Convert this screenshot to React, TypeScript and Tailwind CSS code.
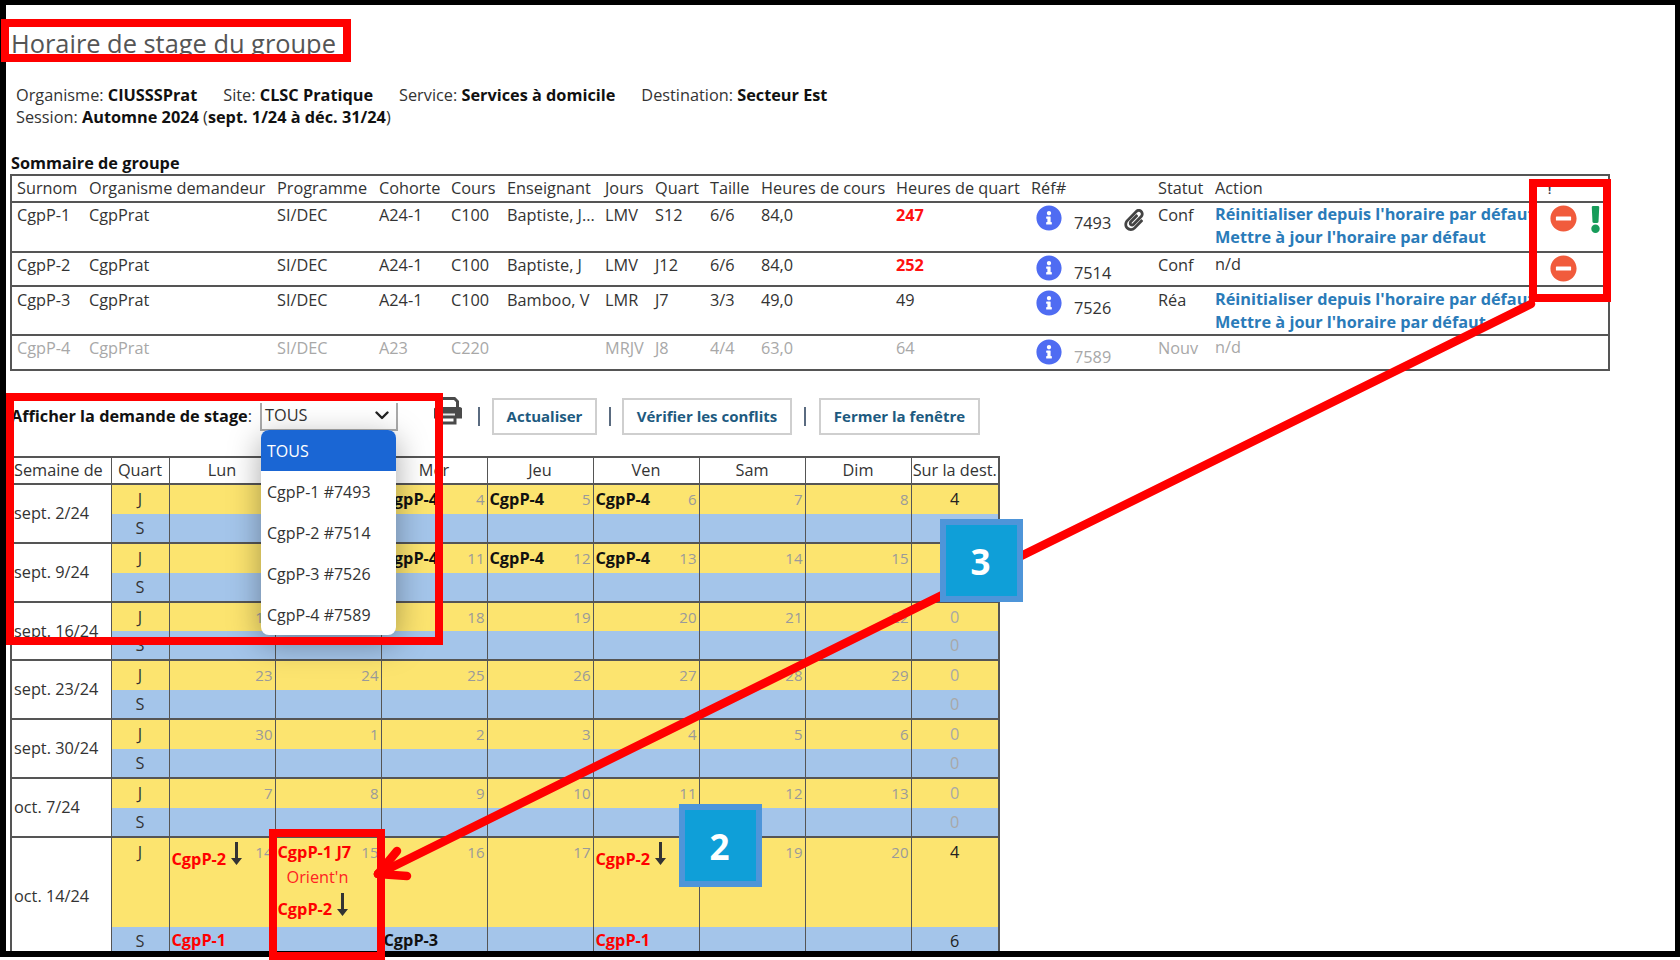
import React from "react";
import { FaInfoCircle, FaMinusCircle, FaPaperclip, FaExclamation } from "react-icons/fa";

const GRAY = "text-[#a8a8a8]";

function ChevronDown() {
  return (
    <svg width="14" height="9" viewBox="0 0 14 9" fill="none" stroke="#222" strokeWidth="2.4" strokeLinecap="round" strokeLinejoin="round">
      <path d="M1.5 1.5 7 7l5.5-5.5" />
    </svg>
  );
}

function Printer() {
  return (
    <svg width="28" height="28" viewBox="0 0 28 28" fill="none" stroke="#4a4a4a" strokeWidth="3">
      <path d="M7 11V3.5A2 2 0 0 1 9 1.5h11.5l3 3V11" />
      <path d="M3 11.5h22a2 2 0 0 1 2 2v6.5H1v-6.5a2 2 0 0 1 2-2z" fill="#4a4a4a" />
      <path d="M7 17.5h14" stroke="#e8e8e8" strokeWidth="2" />
      <path d="M7 20v6h14v-6" />
    </svg>
  );
}

function DownArrow() {
  return (
    <svg width="11" height="23" viewBox="0 0 11 23" className="inline-block shrink-0" fill="#333">
      <path d="M4 0h3v16h4l-5.5 7L0 16h4z" />
    </svg>
  );
}

function InfoCell({ n, gray, clip }: { n: string; gray?: boolean; clip?: boolean }) {
  return (
    <div className="flex items-end pl-[5px]">
      <FaInfoCircle className="w-[26px] h-[26px] text-[#4f6cf2] shrink-0" />
      <span className={`ml-[12px] leading-[21px] relative top-[3px] ${gray ? GRAY : ""}`}>{n}</span>
      {clip && <FaPaperclip className="ml-[12px] w-[22px] h-[22px] text-[#444] shrink-0" />}
    </div>
  );
}

const summary = [
  { h: "h-[50px]", top: "", itop: "pt-[2px]", v: ["CgpP-1", "CgpPrat", "SI/DEC", "A24-1", "C100", "Baptiste, J...", "LMV", "S12", "6/6", "84,0"], q: "247", red: true, n: "7493", clip: true, st: "Conf", act: true, stop: true, warn: true },
  { h: "h-[34px]", top: "", itop: "pt-[2px]", v: ["CgpP-2", "CgpPrat", "SI/DEC", "A24-1", "C100", "Baptiste, J", "LMV", "J12", "6/6", "84,0"], q: "252", red: true, n: "7514", st: "Conf", stop: true },
  { h: "h-[49px]", top: "pt-px", itop: "pt-[3px]", v: ["CgpP-3", "CgpPrat", "SI/DEC", "A24-1", "C100", "Bamboo, V", "LMR", "J7", "3/3", "49,0"], q: "49", n: "7526", st: "Réa", act: true },
  { h: "h-[35px]", top: "", itop: "pt-[3px]", v: ["CgpP-4", "CgpPrat", "SI/DEC", "A23", "C220", "", "MRJV", "J8", "4/4", "63,0"], q: "64", n: "7589", st: "Nouv", gray: true },
];

const heads = ["Surnom", "Organisme demandeur", "Programme", "Cohorte", "Cours", "Enseignant", "Jours", "Quart", "Taille", "Heures de cours", "Heures de quart", "Réf#", "Statut", "Action"];

function SummaryTable() {
  return (
    <table className="table-fixed border-collapse w-[1598px] -ml-px border-2 border-[#555]">
      <colgroup>
        <col className="w-[71px]" />
        <col className="w-[188px]" />
        <col className="w-[102px]" />
        <col className="w-[72px]" />
        <col className="w-[56px]" />
        <col className="w-[98px]" />
        <col className="w-[50px]" />
        <col className="w-[55px]" />
        <col className="w-[51px]" />
        <col className="w-[135px]" />
        <col className="w-[135px]" />
        <col className="w-[127px]" />
        <col className="w-[57px]" />
        <col className="w-[322px]" />
        <col className="w-[79px]" />
      </colgroup>
      <thead>
        <tr className="h-[27px] border-b-2 border-[#555]">
          {heads.map((h, i) => (
            <th key={h} className={`font-normal text-left whitespace-nowrap leading-[22px] pb-[2px] ${i === 0 ? "pl-[5px] pr-[7px]" : "px-[7px]"}`}>{h}</th>
          ))}
          <th className="font-bold text-left pl-[18px] pt-[3px] text-[11px] text-[#334]">!</th>
        </tr>
      </thead>
      <tbody>
        {summary.map((r) => (
          <tr key={r.n} className={`${r.h} border-b-2 border-[#555] align-top`}>
            {r.v.map((c, i) => (
              <td key={i} className={`${i === 0 ? "pl-[5px] pr-[7px]" : "px-[7px]"} ${r.top} whitespace-nowrap leading-[24px] ${r.gray ? GRAY : ""}`}>{c}</td>
            ))}
            <td className={`px-[7px] ${r.top} leading-[24px] ${r.red ? "font-bold text-[#ff1111]" : r.gray ? GRAY : ""}`}>{r.q}</td>
            <td className={`px-[7px] ${r.itop}`}><InfoCell n={r.n} gray={r.gray} clip={r.clip} /></td>
            <td className={`px-[7px] ${r.top} leading-[24px] ${r.gray ? GRAY : ""}`}>{r.st}</td>
            <td className={`px-[7px] ${r.top} whitespace-nowrap leading-[23px]`}>
              {r.act ? (
                <div className="font-bold text-[#2a7bb9]">
                  <div>Réinitialiser depuis l'horaire par défaut</div>
                  <div>Mettre à jour l'horaire par défaut</div>
                </div>
              ) : (
                <span className={r.gray ? GRAY : ""}>n/d</span>
              )}
            </td>
            <td className="pl-[20px] pt-[2px]">
              <div className="flex items-start">
                {r.stop && <FaMinusCircle className="w-[27px] h-[27px] text-[#f15b3c] shrink-0" />}
                {r.warn && <FaExclamation className="ml-[5px] mt-px w-[27px] h-[27px] text-[#179c5a] shrink-0" />}
              </div>
            </td>
          </tr>
        ))}
      </tbody>
    </table>
  );
}

type Week = { label: string; dates: number[]; j: Record<number, React.ReactNode>; s: Record<number, React.ReactNode>; destJ: string; destS: string; big?: boolean; jh: string };

const B4 = <span className="font-bold text-[#111]">CgpP-4</span>;
const R = (t: string) => <span className="font-bold text-[#f00]">{t}</span>;
const RA = (t: string) => (
  <span className="flex items-start gap-[5px] mt-[3px]">
    <span className="font-bold text-[#f00] mt-[4px]">{t}</span>
    <DownArrow />
  </span>
);

const weeks: Week[] = [
  { label: "sept. 2/24", jh: "h-[30px]", dates: [2, 3, 4, 5, 6, 7, 8], j: { 1: B4, 2: B4, 3: B4, 4: B4 }, s: {}, destJ: "4", destS: "" },
  { label: "sept. 9/24", jh: "h-[30px]", dates: [9, 10, 11, 12, 13, 14, 15], j: { 1: B4, 2: B4, 3: B4, 4: B4 }, s: {}, destJ: "4", destS: "" },
  { label: "sept. 16/24", jh: "h-[29px]", dates: [16, 17, 18, 19, 20, 21, 22], j: {}, s: {}, destJ: "0", destS: "0" },
  { label: "sept. 23/24", jh: "h-[30px]", dates: [23, 24, 25, 26, 27, 28, 29], j: {}, s: {}, destJ: "0", destS: "0" },
  { label: "sept. 30/24", jh: "h-[30px]", dates: [30, 1, 2, 3, 4, 5, 6], j: {}, s: {}, destJ: "0", destS: "0" },
  { label: "oct. 7/24", jh: "h-[30px]", dates: [7, 8, 9, 10, 11, 12, 13], j: {}, s: {}, destJ: "0", destS: "0" },
  {
    label: "oct. 14/24",
    jh: "h-[90px]",
    dates: [14, 15, 16, 17, 18, 19, 20],
    j: { 0: RA("CgpP-2"), 1: R("CgpP-1 J7"), 4: RA("CgpP-2") },
    s: { 0: R("CgpP-1"), 2: <span className="font-bold text-[#111]">CgpP-3</span>, 4: R("CgpP-1") },
    destJ: "4",
    destS: "6",
    big: true,
  },
];

const dayHeads = ["Lun", "Mar", "Mer", "Jeu", "Ven", "Sam", "Dim"];

function Calendar() {
  return (
    <table className="table-fixed border-collapse w-[988px] -ml-px border-2 border-[#555]">
      <colgroup>
        <col className="w-[100px]" />
        <col className="w-[58px]" />
        <col className="w-[106px]" />
        <col className="w-[106px]" />
        <col className="w-[106px]" />
        <col className="w-[106px]" />
        <col className="w-[106px]" />
        <col className="w-[106px]" />
        <col className="w-[106px]" />
        <col className="w-[88px]" />
      </colgroup>
      <thead>
        <tr className="h-[27px] border-b-2 border-[#555]">
          <th className="font-normal border-r border-[#555] text-left pl-[2px] whitespace-nowrap">Semaine de</th>
          <th className="font-normal border-r border-[#555]">Quart</th>
          {dayHeads.map((d) => (
            <th key={d} className="font-normal border-r border-[#555]">{d}</th>
          ))}
          <th className="font-normal whitespace-nowrap">Sur la dest.</th>
        </tr>
      </thead>
      <tbody>
        {weeks.map((w) => (
          <React.Fragment key={w.label}>
            <tr className={`${w.jh} bg-[#fce46f] align-top`}>
              <td rowSpan={2} className="bg-white border-r border-b-2 border-[#555] pl-[2px] align-middle whitespace-nowrap">{w.label}</td>
              <td className="text-center border-r border-[#555] leading-[28px]">J</td>
              {w.dates.map((d, i) => (
                <td key={i} className="border-r border-[#555] px-[2px] pt-px">
                  <div className="flex justify-between items-start leading-[26px]">
                    {w.j[i] ?? <span />}
                    <span className="text-[#9a9a9a] text-[15px]">{d}</span>
                  </div>
                  {w.big && i === 1 && (
                    <>
                      <div className="pl-[9px] text-[#f22] leading-[26px] -mt-px">Orient'n</div>
                      <div className="mt-px">{RA("CgpP-2")}</div>
                    </>
                  )}
                </td>
              ))}
              <td className={`text-center leading-[28px] ${w.destJ === "0" ? GRAY : "text-[#222]"}`}>{w.destJ}</td>
            </tr>
            <tr className="h-[29px] bg-[#a4c5ea] border-b-2 border-[#555] align-top">
              <td className="text-center border-r border-[#555] leading-[28px]">S</td>
              {w.dates.map((d, i) => (
                <td key={i} className="border-r border-[#555] px-[2px] leading-[26px]">{w.s[i]}</td>
              ))}
              <td className={`text-center leading-[28px] ${w.destS === "0" ? GRAY : "text-[#222]"}`}>{w.destS}</td>
            </tr>
          </React.Fragment>
        ))}
      </tbody>
    </table>
  );
}

function FilterRow() {
  const btn = "h-[37px] border-2 border-[#cfcfcf] flex items-center justify-center font-bold text-[15px] text-[#1d5a80] bg-white";
  const sep = "w-[2px] h-[19px] bg-[#5a6b80]";
  return (
    <div className="flex items-center">
      <div className="w-[249px] whitespace-nowrap"><span className="font-bold text-[#111]">Afficher la demande de stage</span>:</div>
      <div className="w-[138px] h-[28px] border-2 border-t-0 border-[#aaa] flex items-center justify-between pl-[3px] pr-[7px]">
        <span>TOUS</span>
        <ChevronDown />
      </div>
      <div className="ml-[36px] mb-[11px]"><Printer /></div>
      <div className={`ml-[16px] ${sep}`} />
      <div className={`ml-[12px] w-[105px] ${btn}`}>Actualiser</div>
      <div className={`ml-[12px] ${sep}`} />
      <div className={`ml-[11px] w-[170px] ${btn}`}>Vérifier les conflits</div>
      <div className={`ml-[12px] ${sep}`} />
      <div className={`ml-[13px] w-[161px] ${btn}`}>Fermer la fenêtre</div>
    </div>
  );
}

function Dropdown() {
  const items = ["CgpP-1 #7493", "CgpP-2 #7514", "CgpP-3 #7526", "CgpP-4 #7589"];
  return (
    <div className="absolute left-[261px] top-[430px] w-[135px] h-[205px] bg-white rounded-[8px] overflow-hidden text-[16px] shadow-[0_8px_32px_rgba(0,0,0,0.35)]">
      <div className="h-[41px] bg-[#1a66d4] text-white flex items-center pl-[6px]">TOUS</div>
      {items.map((t) => (
        <div key={t} className="h-[41px] flex items-center pl-[6px] text-[#333]">{t}</div>
      ))}
    </div>
  );
}

function NumberBox({ n, cls }: { n: string; cls: string }) {
  return (
    <div className={`absolute w-[83px] h-[83px] bg-[#0f9fd8] border-[6px] border-[#4e95d9] flex items-center justify-center pt-[4px] pr-[2px] text-white font-bold text-[35px] ${cls}`}>{n}</div>
  );
}

export default function App() {
  return (
    <div className="relative w-[1680px] h-[960px] overflow-hidden bg-white font-['Open_Sans',sans-serif] text-[16.3px] text-[#333]">
      <div className="w-[1680px] h-[957px] overflow-hidden border-t-[5px] border-l-[6px] border-r-[5px] border-b-[6px] border-black pl-[5px]">
        <h1 className="mt-[21px] text-[25.4px] leading-[34px] text-[#555] font-normal">Horaire de stage du groupe</h1>
        <div className="mt-[24px] pl-[5px] leading-[22px]">
          <div className="flex gap-[26px]">
            <span>Organisme: <b className="text-[#111]">CIUSSSPrat</b></span>
            <span>Site: <b className="text-[#111]">CLSC Pratique</b></span>
            <span>Service: <b className="text-[#111]">Services à domicile</b></span>
            <span>Destination: <b className="text-[#111]">Secteur Est</b></span>
          </div>
          <div>Session: <b className="text-[#111]">Automne 2024</b> (<b className="text-[#111]">sept. 1/24 à déc. 31/24</b>)</div>
        </div>
        <div className="mt-[25px] font-bold text-[#111] leading-[21px]">Sommaire de groupe</div>
        <SummaryTable />
        <div className="mt-[26px]"><FilterRow /></div>
        <div className="mt-[20px]"><Calendar /></div>
      </div>

      <Dropdown />

      <svg className="absolute left-0 top-0" width="1680" height="960" fill="none" stroke="#ff0000" strokeWidth="8.5" strokeLinecap="round">
        <path d="M1531 304 378 874" />
        <path d="M378 874 397 851" />
        <path d="M378 874 407 876" />
      </svg>

      <div className="absolute left-[1px] top-[19px] w-[350px] h-[43px] border-[8px] border-[#ff0000]" />
      <div className="absolute left-[1529px] top-[179px] w-[82px] h-[123px] border-[8px] border-[#ff0000]" />
      <div className="absolute left-[6px] top-[393px] w-[437px] h-[252px] border-[8px] border-[#ff0000]" />
      <div className="absolute left-[269px] top-[829px] w-[116px] h-[131px] border-[8px] border-[#ff0000]" />

      <NumberBox n="3" cls="left-[940px] top-[519px]" />
      <NumberBox n="2" cls="left-[679px] top-[804px]" />
    </div>
  );
}
